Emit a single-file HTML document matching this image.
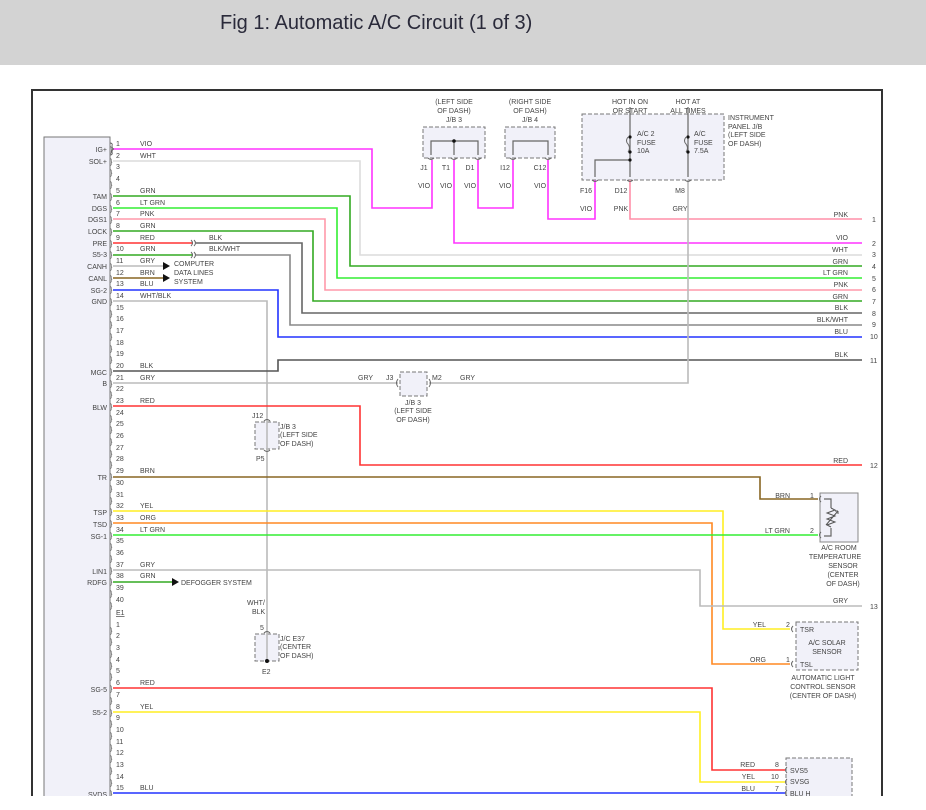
<!DOCTYPE html>
<html><head><meta charset="utf-8">
<style>
html,body{margin:0;padding:0;background:#fff;width:926px;height:810px;overflow:hidden}
.hdr{position:absolute;left:0;top:0;width:926px;height:65px;background:#d3d3d3}
.hdr span{position:absolute;left:220px;top:12px;font:20px "Liberation Sans",sans-serif;color:#2a2a3a}
svg{position:absolute;left:0;top:0}
text{font-family:"Liberation Sans",sans-serif;font-size:7px;fill:#444}
</style></head><body>
<div class="hdr"><span>Fig 1: Automatic A/C Circuit (1 of 3)</span></div>
<svg width="926" height="810" viewBox="0 0 926 810">
<!-- frame -->
<path d="M32 810 V90 H882 V810" fill="none" stroke="#333" stroke-width="2"/>
<line x1="32" y1="795" x2="882" y2="795" stroke="#fff" stroke-width="0"/>
<!-- module -->
<rect x="44" y="137" width="66" height="680" fill="#f1f1f9" stroke="#777" stroke-width="1"/>
<!-- J/B3 box -->
<rect x="423" y="127" width="62" height="31" fill="#f1f1f9" stroke="#777" stroke-dasharray="4,2"/>
<rect x="505" y="127" width="50" height="31" fill="#f1f1f9" stroke="#777" stroke-dasharray="4,2"/>
<rect x="582" y="114" width="142" height="66" fill="#f1f1f9" stroke="#777" stroke-dasharray="4,2"/>
<rect x="400" y="372" width="27" height="24" fill="#f1f1f9" stroke="#777" stroke-dasharray="4,2"/>
<rect x="255" y="422" width="24" height="27" fill="#f1f1f9" stroke="#777" stroke-dasharray="4,2"/>
<rect x="255" y="634" width="24" height="27" fill="#f1f1f9" stroke="#777" stroke-dasharray="4,2"/>
<rect x="820" y="493" width="38" height="49" fill="#f1f1f9" stroke="#888"/>
<rect x="796" y="622" width="62" height="48" fill="#f1f1f9" stroke="#777" stroke-dasharray="4,2"/>
<rect x="786" y="758" width="66" height="40" fill="#f1f1f9" stroke="#777" stroke-dasharray="4,2"/>
<g fill="none" stroke-width="1.6">
<!-- J/B internals -->
<path d="M431 155 V141 H478 V155 M454 141 V155" stroke="#666" stroke-width="1.2"/>
<path d="M513 155 V141 H548 V155" stroke="#666" stroke-width="1.2"/>
<path d="M630 107 V177 M688 107 V177 M630 160 H595 V177" stroke="#666" stroke-width="1.2"/>
<!-- wires -->
<path d="M113 149 H372 V208 H432 V160" stroke="#ff33ff"/>
<path d="M478 160 V208 H513 V160" stroke="#ff33ff"/>
<path d="M548 160 V219 H595 V180" stroke="#ff33ff"/>
<path d="M454 160 V243 H862" stroke="#ff33ff"/>
<path d="M630 180 V219 H862" stroke="#ff8fa8"/>
<path d="M113 161 H360 V255 H862" stroke="#dcdcdc"/>
<path d="M113 196 H350 V266 H862" stroke="#33aa22"/>
<path d="M113 208 H337 V278 H862" stroke="#33ee33"/>
<path d="M113 219 H325 V290 H862" stroke="#ff99aa"/>
<path d="M113 231 H313 V301 H862" stroke="#33aa22"/>
<path d="M113 243 H193" stroke="#ff3333"/>
<path d="M196 243 H302 V313 H862" stroke="#666"/>
<path d="M113 255 H193" stroke="#33aa22"/>
<path d="M196 255 H290 V325 H862" stroke="#888"/>
<path d="M113 266 H163" stroke="#bbb"/>
<path d="M113 278 H163" stroke="#886622"/>
<path d="M113 290 H278 V337 H862" stroke="#2233ff"/>
<path d="M113 301 H267 V660" stroke="#bbb"/>
<path d="M113 371 H278 V360 H862" stroke="#555"/>
<path d="M113 383 H398 M429 383 H688 V180" stroke="#bbb"/>
<path d="M113 406 H360 V465 H862" stroke="#ff3333"/>
<path d="M113 477 H760 V499 H818" stroke="#886622"/>
<path d="M113 511 H723 V629 H790" stroke="#ffee22"/>
<path d="M113 523 H712 V664 H790" stroke="#ff8822"/>
<path d="M113 535 H818" stroke="#33ee33"/>
<path d="M113 570 H700 V606 H862" stroke="#bbb"/>
<path d="M113 582 H172" stroke="#33aa22"/>
<path d="M113 688 H712 V770 H785" stroke="#ff3333"/>
<path d="M113 712 H700 V782 H785" stroke="#ffee22"/>
<path d="M113 793 H785" stroke="#2233ff"/>
<!-- sensor internal -->
<path d="M824 499 H831 V508 M831 528 V536 H824" stroke="#666" stroke-width="1.2"/>
<path d="M831 508 l4 2 -8 3 8 3 -8 3 8 3 -8 3 4 2 M826 525 l12 -14 M838 511 l-3 0 M838 511 l0 3" stroke="#555" stroke-width="1"/>
</g>
<!-- dots & arrows -->
<g fill="#111">
<circle cx="454" cy="141" r="1.8"/><circle cx="630" cy="137" r="1.6"/><circle cx="630" cy="152" r="1.6"/><circle cx="630" cy="160" r="1.6"/><circle cx="688" cy="137" r="1.6"/><circle cx="688" cy="152" r="1.6"/>
<circle cx="267" cy="661" r="2"/>
<path d="M163 262 L170 266 L163 270Z M163 274 L170 278 L163 282Z M172 578 L179 582 L172 586Z"/>
</g>
<g fill="none" stroke="#666" stroke-width="1">
<path d="M628 137 q-3 4 0 7 q3 4 0 8 M686 137 q-3 4 0 7 q3 4 0 8"/>
<path d="M191 240 q3 3 0 6 M194 240 q3 3 0 6 M191 252 q3 3 0 6 M194 252 q3 3 0 6"/>
<path d="M428 158 q3 3 6 0 M451 158 q3 3 6 0 M475 158 q3 3 6 0 M510 158 q3 3 6 0 M545 158 q3 3 6 0 M592 180 q3 3 6 0 M627 180 q3 3 6 0 M685 180 q3 3 6 0"/>
<path d="M398 379 q-3 4 0 8 M429 379 q3 4 0 8 M264 421 q3 -3 6 0 M264 450 q3 3 6 0 M264 633 q3 -3 6 0"/>
<path d="M821 496 q-3 3 0 6 M821 532 q-3 3 0 6 M793 626 q-3 3 0 6 M793 661 q-3 3 0 6 M787 767 q-3 3 0 6 M787 779 q-3 3 0 6 M787 790 q-3 3 0 6"/>
</g>
<!-- pin connector marks -->
<g fill="none" stroke="#555" stroke-width="0.9">
<path d="M110 143 q3 0 2 3 q0 3 2 3 q-2 0 -2 3 q1 3 -2 3" id="c"/>
</g>
<g font-size="9" fill="#555" style="font-family:'Liberation Sans',sans-serif">
<text x="110" y="152" font-size="9">}</text><text x="110" y="164" font-size="9">}</text><text x="110" y="175" font-size="9">}</text><text x="110" y="187" font-size="9">}</text><text x="110" y="199" font-size="9">}</text><text x="110" y="211" font-size="9">}</text><text x="110" y="222" font-size="9">}</text><text x="110" y="234" font-size="9">}</text><text x="110" y="246" font-size="9">}</text><text x="110" y="257" font-size="9">}</text><text x="110" y="269" font-size="9">}</text><text x="110" y="281" font-size="9">}</text><text x="110" y="292" font-size="9">}</text><text x="110" y="304" font-size="9">}</text><text x="110" y="316" font-size="9">}</text><text x="110" y="327" font-size="9">}</text><text x="110" y="339" font-size="9">}</text><text x="110" y="351" font-size="9">}</text><text x="110" y="362" font-size="9">}</text><text x="110" y="374" font-size="9">}</text><text x="110" y="386" font-size="9">}</text><text x="110" y="397" font-size="9">}</text><text x="110" y="409" font-size="9">}</text><text x="110" y="421" font-size="9">}</text><text x="110" y="432" font-size="9">}</text><text x="110" y="444" font-size="9">}</text><text x="110" y="456" font-size="9">}</text><text x="110" y="467" font-size="9">}</text><text x="110" y="479" font-size="9">}</text><text x="110" y="491" font-size="9">}</text><text x="110" y="503" font-size="9">}</text><text x="110" y="514" font-size="9">}</text><text x="110" y="526" font-size="9">}</text><text x="110" y="538" font-size="9">}</text><text x="110" y="549" font-size="9">}</text><text x="110" y="561" font-size="9">}</text><text x="110" y="573" font-size="9">}</text><text x="110" y="584" font-size="9">}</text><text x="110" y="596" font-size="9">}</text><text x="110" y="608" font-size="9">}</text>
<text x="110" y="633" font-size="9">}</text><text x="110" y="644" font-size="9">}</text><text x="110" y="656" font-size="9">}</text><text x="110" y="668" font-size="9">}</text><text x="110" y="679" font-size="9">}</text><text x="110" y="691" font-size="9">}</text><text x="110" y="703" font-size="9">}</text><text x="110" y="715" font-size="9">}</text><text x="110" y="726" font-size="9">}</text><text x="110" y="738" font-size="9">}</text><text x="110" y="750" font-size="9">}</text><text x="110" y="761" font-size="9">}</text><text x="110" y="773" font-size="9">}</text><text x="110" y="785" font-size="9">}</text><text x="110" y="796" font-size="9">}</text>
</g>
<!-- pin numbers -->
<g>
<text x="116" y="146">1</text><text x="116" y="158">2</text><text x="116" y="169">3</text><text x="116" y="181">4</text><text x="116" y="193">5</text><text x="116" y="205">6</text><text x="116" y="216">7</text><text x="116" y="228">8</text><text x="116" y="240">9</text><text x="116" y="251">10</text><text x="116" y="263">11</text><text x="116" y="275">12</text><text x="116" y="286">13</text><text x="116" y="298">14</text><text x="116" y="310">15</text><text x="116" y="321">16</text><text x="116" y="333">17</text><text x="116" y="345">18</text><text x="116" y="356">19</text><text x="116" y="368">20</text><text x="116" y="380">21</text><text x="116" y="391">22</text><text x="116" y="403">23</text><text x="116" y="415">24</text><text x="116" y="426">25</text><text x="116" y="438">26</text><text x="116" y="450">27</text><text x="116" y="461">28</text><text x="116" y="473">29</text><text x="116" y="485">30</text><text x="116" y="497">31</text><text x="116" y="508">32</text><text x="116" y="520">33</text><text x="116" y="532">34</text><text x="116" y="543">35</text><text x="116" y="555">36</text><text x="116" y="567">37</text><text x="116" y="578">38</text><text x="116" y="590">39</text><text x="116" y="602">40</text>
<text x="116" y="615" text-decoration="underline">E1</text>
<text x="116" y="627">1</text><text x="116" y="638">2</text><text x="116" y="650">3</text><text x="116" y="662">4</text><text x="116" y="673">5</text><text x="116" y="685">6</text><text x="116" y="697">7</text><text x="116" y="709">8</text><text x="116" y="720">9</text><text x="116" y="732">10</text><text x="116" y="744">11</text><text x="116" y="755">12</text><text x="116" y="767">13</text><text x="116" y="779">14</text><text x="116" y="790">15</text>
</g>
<!-- module labels -->
<g text-anchor="end">
<text x="107" y="152">IG+</text><text x="107" y="164">SOL+</text><text x="107" y="199">TAM</text><text x="107" y="211">DGS</text><text x="107" y="222">DGS1</text><text x="107" y="234">LOCK</text><text x="107" y="246">PRE</text><text x="107" y="257">S5-3</text><text x="107" y="269">CANH</text><text x="107" y="281">CANL</text><text x="107" y="293">SG-2</text><text x="107" y="304">GND</text><text x="107" y="375">MGC</text><text x="107" y="386">B</text><text x="107" y="410">BLW</text><text x="107" y="480">TR</text><text x="107" y="515">TSP</text><text x="107" y="527">TSD</text><text x="107" y="539">SG-1</text><text x="107" y="574">LIN1</text><text x="107" y="585">RDFG</text><text x="107" y="692">SG-5</text><text x="107" y="715">S5-2</text><text x="107" y="797">SVDS</text>
</g>
<!-- wire labels left -->
<g>
<text x="140" y="146">VIO</text><text x="140" y="158">WHT</text><text x="140" y="193">GRN</text><text x="140" y="205">LT GRN</text><text x="140" y="216">PNK</text><text x="140" y="228">GRN</text><text x="140" y="240">RED</text><text x="140" y="251">GRN</text><text x="140" y="263">GRY</text><text x="140" y="275">BRN</text><text x="140" y="286">BLU</text><text x="140" y="298">WHT/BLK</text><text x="140" y="368">BLK</text><text x="140" y="380">GRY</text><text x="140" y="403">RED</text><text x="140" y="473">BRN</text><text x="140" y="508">YEL</text><text x="140" y="520">ORG</text><text x="140" y="532">LT GRN</text><text x="140" y="567">GRY</text><text x="140" y="578">GRN</text><text x="140" y="685">RED</text><text x="140" y="709">YEL</text><text x="140" y="790">BLU</text>
<text x="209" y="240">BLK</text><text x="209" y="251">BLK/WHT</text>
<text x="174" y="266">COMPUTER</text><text x="174" y="275">DATA LINES</text><text x="174" y="284">SYSTEM</text>
<text x="181" y="585">DEFOGGER SYSTEM</text>
</g>
<!-- right labels -->
<g text-anchor="end">
<text x="848" y="217">PNK</text><text x="848" y="240">VIO</text><text x="848" y="252">WHT</text><text x="848" y="264">GRN</text><text x="848" y="275">LT GRN</text><text x="848" y="287">PNK</text><text x="848" y="299">GRN</text><text x="848" y="310">BLK</text><text x="848" y="322">BLK/WHT</text><text x="848" y="334">BLU</text><text x="848" y="357">BLK</text><text x="848" y="463">RED</text><text x="848" y="603">GRY</text>
<text x="790" y="498">BRN</text><text x="790" y="533">LT GRN</text><text x="766" y="627">YEL</text><text x="766" y="662">ORG</text><text x="755" y="767">RED</text><text x="755" y="779">YEL</text><text x="755" y="791">BLU</text>
</g>
<g>
<text x="872" y="222">1</text><text x="872" y="246">2</text><text x="872" y="257">3</text><text x="872" y="269">4</text><text x="872" y="281">5</text><text x="872" y="292">6</text><text x="872" y="304">7</text><text x="872" y="316">8</text><text x="872" y="327">9</text><text x="870" y="339">10</text><text x="870" y="363">11</text><text x="870" y="468">12</text><text x="870" y="609">13</text>
<text x="810" y="498">1</text><text x="810" y="533">2</text><text x="786" y="627">2</text><text x="786" y="662">1</text><text x="775" y="767">8</text><text x="771" y="779">10</text><text x="775" y="791">7</text>
<text x="800" y="632">TSR</text><text x="800" y="667">TSL</text><text x="790" y="773">SVS5</text><text x="790" y="784">SVSG</text><text x="790" y="796">BLU H</text>
</g>
<!-- component labels -->
<g text-anchor="middle">
<text x="454" y="104">(LEFT SIDE</text><text x="454" y="113">OF DASH)</text><text x="454" y="122">J/B 3</text>
<text x="530" y="104">(RIGHT SIDE</text><text x="530" y="113">OF DASH)</text><text x="530" y="122">J/B 4</text>
<text x="630" y="104">HOT IN ON</text><text x="630" y="113">OR START</text><text x="688" y="104">HOT AT</text><text x="688" y="113">ALL TIMES</text>
<text x="424" y="170">J1</text><text x="446" y="170">T1</text><text x="470" y="170">D1</text><text x="505" y="170">I12</text><text x="540" y="170">C12</text>
<text x="424" y="188">VIO</text><text x="446" y="188">VIO</text><text x="470" y="188">VIO</text><text x="505" y="188">VIO</text><text x="540" y="188">VIO</text>
<text x="586" y="193">F16</text><text x="621" y="193">D12</text><text x="680" y="193">M8</text>
<text x="586" y="211">VIO</text><text x="621" y="211">PNK</text><text x="680" y="211">GRY</text>
<text x="413" y="405">J/B 3</text><text x="413" y="413">(LEFT SIDE</text><text x="413" y="422">OF DASH)</text>
<text x="839" y="550">A/C ROOM</text><text x="835" y="559">TEMPERATURE</text><text x="843" y="568">SENSOR</text><text x="843" y="577">(CENTER</text><text x="843" y="586">OF DASH)</text>
<text x="827" y="645">A/C SOLAR</text><text x="827" y="654">SENSOR</text>
<text x="823" y="680">AUTOMATIC LIGHT</text><text x="823" y="689">CONTROL SENSOR</text><text x="823" y="698">(CENTER OF DASH)</text>
</g>
<g>
<text x="637" y="136">A/C 2</text><text x="637" y="145">FUSE</text><text x="637" y="153">10A</text>
<text x="694" y="136">A/C</text><text x="694" y="145">FUSE</text><text x="694" y="153">7.5A</text>
<text x="728" y="120">INSTRUMENT</text><text x="728" y="129">PANEL J/B</text><text x="728" y="137">(LEFT SIDE</text><text x="728" y="146">OF DASH)</text>
<text x="358" y="380">GRY</text><text x="386" y="380">J3</text><text x="432" y="380">M2</text><text x="460" y="380">GRY</text>
<text x="252" y="418">J12</text><text x="280" y="429">J/B 3</text><text x="280" y="437">(LEFT SIDE</text><text x="280" y="446">OF DASH)</text><text x="256" y="461">P5</text>
<text x="247" y="605">WHT/</text><text x="252" y="614">BLK</text><text x="260" y="630">5</text>
<text x="280" y="641">J/C E37</text><text x="280" y="649">(CENTER</text><text x="280" y="658">OF DASH)</text><text x="262" y="674">E2</text>
</g>
<rect x="0" y="796" width="926" height="14" fill="#fff"/>
</svg>
</body></html>
